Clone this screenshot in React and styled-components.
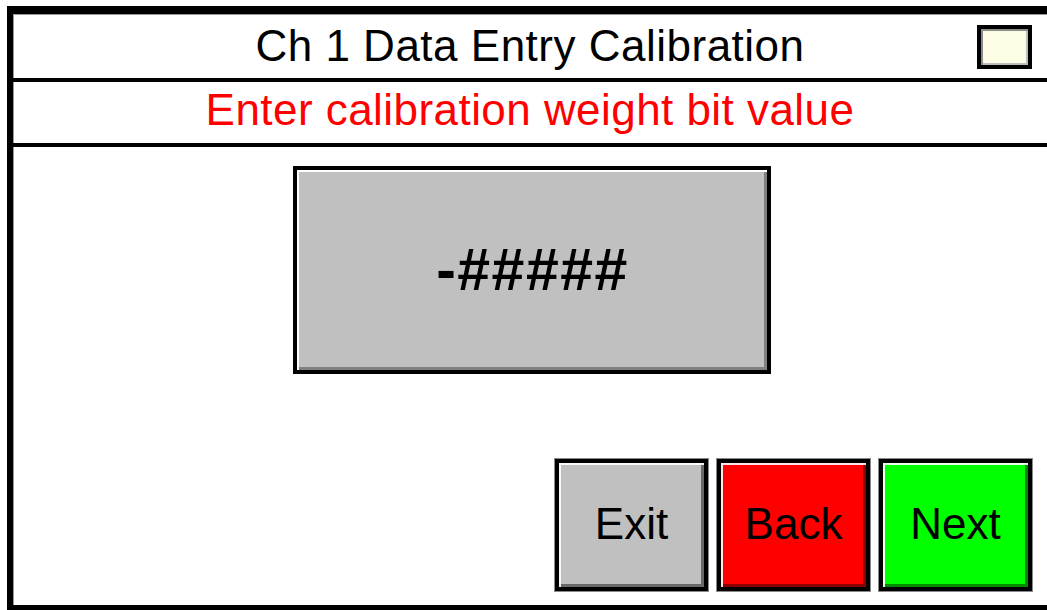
import React from "react";
import styled, {createGlobalStyle} from "styled-components";

const Global = createGlobalStyle`
  html, body {
    margin: 0;
    padding: 0;
    background: #ffffff;
    overflow: hidden;
  }
  body {
    font-family: "Liberation Sans", Arial, sans-serif;
  }
`;

const Frame = styled.div`
  box-sizing: border-box;
  margin: 6px 0 0 7px;
  width: 1040px;
  height: 604px;
  border-left: 6px solid #000;
  border-top: 8px solid #000;
  border-bottom: 5px solid #000;
  box-shadow: inset 1px 1px 0 #9a9a9a;
  display: flex;
  flex-direction: column;
  background: #fff;
`;

const Row = styled.div`
  box-sizing: border-box;
  height: ${({h}) => h}px;
  border-bottom: 4px solid #000;
  display: flex;
  align-items: center;
  justify-content: center;
  position: relative;
  padding-bottom: ${({lift}) => lift || 0}px;
`;

const Title = styled.div`
  font-size: 44px;
  color: #000;
  letter-spacing: 0.5px;
`;

const Prompt = styled.div`
  font-size: 44px;
  color: #ff0000;
  letter-spacing: 0.45px;
`;

const Check = styled.div`
  position: absolute;
  right: 15px;
  top: 11px;
  box-sizing: border-box;
  width: 55px;
  height: 44px;
  border: 4px solid #000;
  background: #fdfde6;
  box-shadow: inset 2px 2px 0 #8c8c8c, inset -2px -2px 0 #bdbdbd;
`;

const Body = styled.div`
  flex: 1;
  display: flex;
  flex-direction: column;
  padding: 19px 15px 14px 0;
`;

const ValueBox = styled.div`
  box-sizing: border-box;
  align-self: center;
  margin-left: 18px;
  width: 478px;
  height: 208px;
  border: 4px solid #000;
  background: #c0c0c0;
  box-shadow: inset 2px 2px 0 #fff, inset -3px -3px 0 #808080;
  display: flex;
  align-items: center;
  justify-content: center;
  font-size: 59px;
  font-weight: bold;
  letter-spacing: 1.5px;
  color: #000;
  padding-left: 2px;
`;

const Buttons = styled.div`
  margin-top: auto;
  align-self: flex-end;
  display: flex;
  gap: 9px;
`;

const Button = styled.button`
  box-sizing: border-box;
  width: 153px;
  height: 132px;
  border: 4px solid #000;
  outline: 1px solid #8a8a8a;
  background: ${({bg}) => bg};
  box-shadow: inset 2px 2px 0 rgba(255,255,255,0.9), inset -3px -3px 0 rgba(0,0,0,0.45);
  font-family: "Liberation Sans", Arial, sans-serif;
  font-size: 44px;
  color: #000;
  padding: 0 0 2px 0;
  cursor: pointer;
`;

export default function App() {
  return (
    <>
      <Global />
      <Frame>
        <Row h={68}>
          <Title>Ch 1 Data Entry Calibration</Title>
          <Check />
        </Row>
        <Row h={65} lift={6}>
          <Prompt>Enter calibration weight bit value</Prompt>
        </Row>
        <Body>
          <ValueBox>-#####</ValueBox>
          <Buttons>
            <Button bg="#c0c0c0">Exit</Button>
            <Button bg="#ff0000">Back</Button>
            <Button bg="#00ff00">Next</Button>
          </Buttons>
        </Body>
      </Frame>
    </>
  );
}
